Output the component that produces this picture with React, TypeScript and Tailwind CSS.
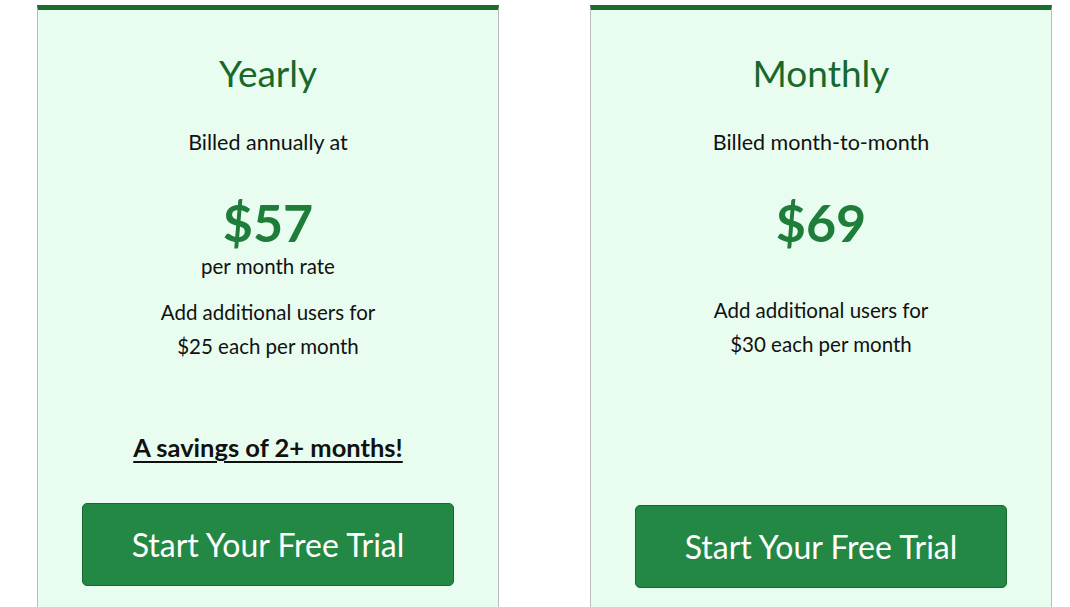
import React from 'react';

type Plan = {
  name: string;
  billing: string;
  price: string;
  rateNote?: string;
  extraUsers: string;
  savings?: string;
};

const plans: Plan[] = [
  {
    name: 'Yearly',
    billing: 'Billed annually at',
    price: '$57',
    rateNote: 'per month rate',
    extraUsers: '$25 each per month',
    savings: 'A savings of 2+ months!',
  },
  {
    name: 'Monthly',
    billing: 'Billed month-to-month',
    price: '$69',
    extraUsers: '$30 each per month',
  },
];

function PlanCard({ plan }: { plan: Plan }) {
  return (
    <div className="w-[462px] h-[640px] flex flex-col items-center border-x border-[#b9bdb9] border-t-[5px] border-t-[#1b6d2f] bg-[#e8fdf0] text-center">
      {/* Heading */}
      <h2 className="mt-[41px] text-[37px] leading-[44px] text-[#17692b]">{plan.name}</h2>
      <p className="mt-[33px] text-[21.5px] leading-[28px] text-[#111]">{plan.billing}</p>

      {/* Price */}
      <div className="mt-[36px] text-[52px] leading-[60px] font-bold text-[#1f7d3a]">{plan.price}</div>
      {plan.rateNote && (
        <p className="mt-px text-[20.5px] leading-[26px] text-[#111]">{plan.rateNote}</p>
      )}

      <p
        className={
          plan.rateNote
            ? 'mt-[16px] text-[20.5px] leading-[34px] text-[#111]'
            : 'mt-[41px] text-[20.5px] leading-[34px] text-[#111]'
        }
      >
        Add additional users for
        <br />
        {plan.extraUsers}
      </p>

      {plan.savings ? (
        <p className="mt-[68px] text-[25.5px] leading-[32px] font-bold underline underline-offset-[4px] decoration-2 text-[#111]">
          {plan.savings}
        </p>
      ) : null}

      <button
        className={
          plan.savings
            ? 'mt-[40px] w-[372px] h-[83px] rounded-[5px] border border-[#17692f] bg-[#228844] text-[32px] text-white'
            : 'mt-[144px] w-[372px] h-[83px] rounded-[5px] border border-[#17692f] bg-[#228844] text-[32px] text-white'
        }
      >
        Start Your Free Trial
      </button>
    </div>
  );
}

export default function App() {
  return (
    <div className="h-[607px] overflow-hidden bg-white font-['Lato',sans-serif]">
      <div className="flex gap-[91px] pl-[37px] pt-[5px]">
        {plans.map((plan) => (
          <PlanCard key={plan.name} plan={plan} />
        ))}
      </div>
    </div>
  );
}
